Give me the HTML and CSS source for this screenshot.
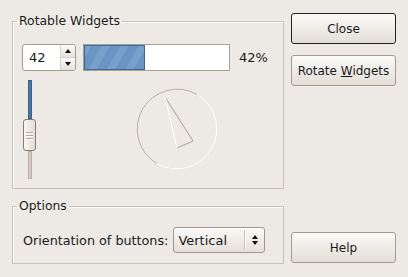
FILE: index.html
```html
<!DOCTYPE html>
<html lang="en">
<head>
<meta charset="UTF-8">
<title>Rotable Widgets</title>
<link rel="stylesheet" href="styles.css">
</head>
<body>
<div class="left">
    <fieldset class="group rotable">
        <legend>Rotable Widgets</legend>
        <div class="row">
            <div class="spin">
                <span class="spin-value">42</span>
                <div class="spin-arrows">
                    <span class="arr up"></span>
                    <span class="arr down"></span>
                </div>
            </div>
            <div class="progress"><div class="fill" style="width: 42%"></div></div>
            <span class="pct">42%</span>
        </div>
        <div class="row second">
            <div class="slider">
                <div class="track-on"></div>
                <div class="handle"><i></i><i></i><i></i></div>
                <div class="track-off"></div>
            </div>
            <svg class="dial" width="100" height="100" viewBox="0 0 100 100">
                <path d="M30 84.64 A40 40 0 0 1 70 15.36" fill="none" stroke="#b8afa3" stroke-width="1"/>
                <path d="M70 15.36 A40 40 0 0 1 30 84.64" fill="none" stroke="#ffffff" stroke-width="1"/>
                <path d="M38 18 L66 62 L50 69" fill="none" stroke="#a99f93" stroke-width="1"/>
                <path d="M50 69 L38 18" fill="none" stroke="#ffffff" stroke-width="1"/>
            </svg>
        </div>
    </fieldset>
    <fieldset class="group options">
        <legend>Options</legend>
        <div class="opt-row">
            <span>Orientation of buttons:</span>
            <div class="combo">
                <span class="combo-text">Vertical</span>
                <span class="combo-sep"></span>
                <span class="combo-arrow">
                    <span class="arr up"></span>
                    <span class="arr down"></span>
                </span>
            </div>
        </div>
    </fieldset>
</div>
<div class="buttons">
    <button class="btn default">Close</button>
    <button class="btn">Rotate <u>W</u>idgets</button>
    <button class="btn help">Help</button>
</div>
</body>
</html>
```
FILE: styles.css
```css
* {
    margin: 0;
    padding: 0;
    box-sizing: border-box;
}

body {
    width: 408px;
    height: 277px;
    background-color: #edeae5;
    font-family: "DejaVu Sans", sans-serif;
    font-size: 12px;
    color: #1a1a1a;
    display: flex;
    gap: 7px;
    padding: 13px 12px 13px 12px;
}

.left {
    width: 272px;
    display: flex;
    flex-direction: column;
    gap: 9px;
}

.group {
    border: 1px solid #c8c2b9;
    box-shadow: inset 1px 1px 0 #fbfaf8;
    padding: 15px 9px 9px 9px;
}

.group legend {
    margin-left: -5px;
    padding: 0 2px;
    line-height: 16px;
    font-size: 12.4px;
}

.row {
    display: flex;
    align-items: center;
}

.spin {
    width: 54px;
    height: 27px;
    display: flex;
    background: #fff;
    border: 1px solid #a39b8f;
    border-radius: 3px;
    overflow: hidden;
}

.spin-value {
    flex: 1;
    padding-left: 6px;
    line-height: 25px;
    font-size: 13px;
}

.spin-arrows {
    width: 15px;
    display: flex;
    flex-direction: column;
    border-left: 1px solid #d8d3cb;
}

.arr {
    display: flex;
    align-items: center;
    justify-content: center;
}

.spin-arrows .arr {
    flex: 1;
    background: linear-gradient(#fbfaf8, #e6e2dc);
}

.spin-arrows .arr + .arr {
    border-top: 1px solid #d8d3cb;
}

.arr::after {
    content: "";
    border-left: 3.5px solid transparent;
    border-right: 3.5px solid transparent;
}

.arr.up::after {
    border-bottom: 4px solid #111;
}

.arr.down::after {
    border-top: 4px solid #111;
}

.progress {
    margin-left: 7px;
    width: 147px;
    height: 27px;
    background: #fff;
    border: 1px solid #a69f94;
}

.fill {
    height: 100%;
    border: 1px solid #3f6893;
    background-color: #6895c4;
    background-image: repeating-linear-gradient(-60deg, #6895c4 0 9px, #76a1cd 9px 16px);
}

.pct {
    margin-left: 9px;
    font-size: 13px;
}

.second {
    margin-top: 9px;
    align-items: flex-start;
}

.slider {
    width: 15px;
    height: 99px;
    display: flex;
    flex-direction: column;
    align-items: center;
}

.track-on {
    width: 4px;
    height: 39px;
    background: #4c76a3;
    border: 1px solid #3b5f86;
}

.handle {
    width: 13px;
    height: 32px;
    border: 1px solid #857d71;
    border-radius: 3px;
    background: linear-gradient(90deg, #f8f6f3, #e2ddd6);
    display: flex;
    flex-direction: column;
    align-items: center;
    justify-content: center;
    gap: 2px;
}

.handle i {
    width: 7px;
    height: 1px;
    background: #b2a99c;
    box-shadow: 0 1px 0 #fff;
}

.track-off {
    width: 4px;
    flex: 1;
    background: #d2ccc3;
    border: 1px solid #b6aea3;
}

.dial {
    margin-left: 90px;
    margin-top: -1px;
}

.options {
    padding: 13px 9px 10px 9px;
}

.opt-row {
    display: flex;
    align-items: center;
    gap: 5px;
    font-size: 12.75px;
    padding-left: 1px;
}

.combo {
    width: 92px;
    height: 26px;
    display: flex;
    align-items: center;
    border: 1px solid #9f978b;
    border-radius: 3px;
    background: linear-gradient(#fbfaf8, #e4dfd8);
}

.combo-text {
    flex: 1;
    padding-left: 4px;
    font-size: 13px;
}

.combo-sep {
    width: 1px;
    height: 20px;
    background: #c9c2b8;
    box-shadow: 1px 0 0 #fff;
}

.combo-arrow {
    width: 19px;
    display: flex;
    flex-direction: column;
    align-items: center;
    gap: 2px;
}

.btn {
    width: 105px;
    height: 31px;
    font-family: "DejaVu Sans", sans-serif;
    font-size: 12px;
    color: #1a1a1a;
    border: 1px solid #a39b8f;
    border-radius: 3px;
    background: linear-gradient(#fbfaf8, #e3ded7);
}

.btn.default {
    border-color: #222;
}

.buttons {
    width: 105px;
    display: flex;
    flex-direction: column;
    gap: 11px;
}

.btn.help {
    margin-top: auto;
    margin-bottom: 1px;
}
```
